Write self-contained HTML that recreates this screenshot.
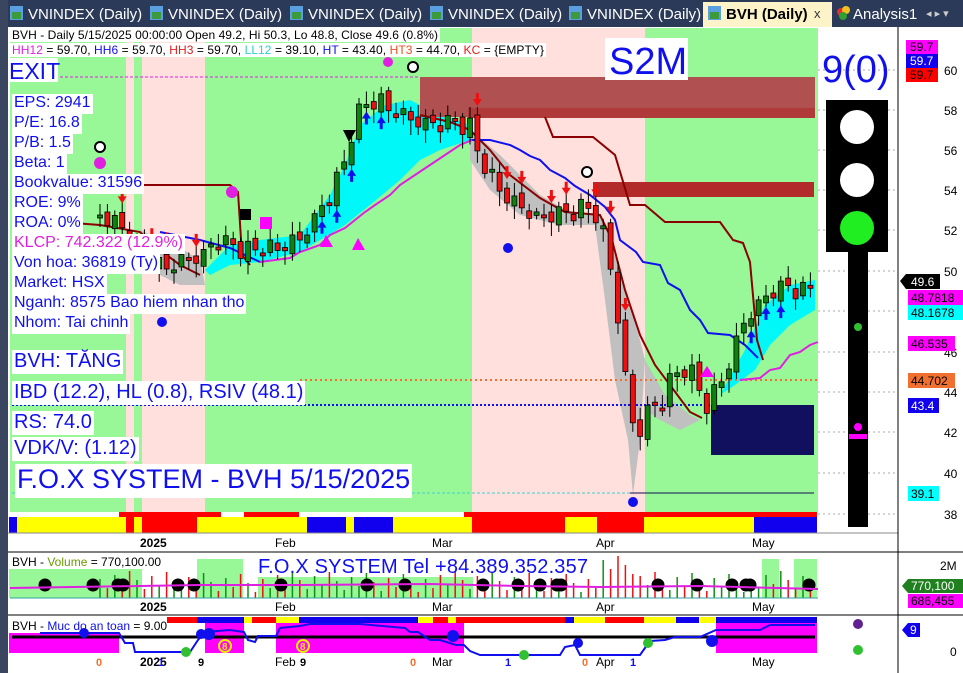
<!DOCTYPE html>
<html><head><meta charset="utf-8"><style>
body{margin:0;width:963px;height:673px;overflow:hidden;background:#fff;font-family:"Liberation Sans","Noto Sans CJK SC",sans-serif;position:relative}
.l{position:absolute;background:#fff;color:#1010ee;white-space:nowrap;line-height:1;padding:1px 2px 1px 2px}
.s15{font-size:16px;height:18px}
.s19{font-size:20px;height:22px}
</style></head><body>
<svg id="s" width="963" height="673" xmlns="http://www.w3.org/2000/svg" style="position:absolute;left:0;top:0;font-family:'Liberation Sans',sans-serif">
<rect x="0" y="0" width="963" height="673" fill="#fff"/>
<rect x="0" y="0" width="963" height="27" fill="#2b3a58"/>
<rect x="0" y="0" width="8" height="673" fill="#3a4560"/>
<g font-size="15" fill="#fff">
<rect x="10" y="6" width="13" height="14" fill="#5aa0e0"/><rect x="12" y="12" width="9" height="7" fill="#3c9a3c"/><text x="28" y="19">VNINDEX (Daily)</text>
<rect x="150" y="6" width="13" height="14" fill="#5aa0e0"/><rect x="152" y="12" width="9" height="7" fill="#3c9a3c"/><text x="168" y="19">VNINDEX (Daily)</text>
<rect x="290" y="6" width="13" height="14" fill="#5aa0e0"/><rect x="292" y="12" width="9" height="7" fill="#3c9a3c"/><text x="308" y="19">VNINDEX (Daily)</text>
<rect x="430" y="6" width="13" height="14" fill="#5aa0e0"/><rect x="432" y="12" width="9" height="7" fill="#3c9a3c"/><text x="448" y="19">VNINDEX (Daily)</text>
<rect x="569" y="6" width="13" height="14" fill="#5aa0e0"/><rect x="571" y="12" width="9" height="7" fill="#3c9a3c"/><text x="587" y="19">VNINDEX (Daily)</text>
</g>
<rect x="703" y="2" width="129" height="25" fill="#fcf3c8"/>
<rect x="708" y="6" width="13" height="14" fill="#5aa0e0"/><rect x="710" y="12" width="9" height="7" fill="#3c9a3c"/>
<text x="726" y="19" font-size="15" font-weight="bold" fill="#000">BVH (Daily)</text>
<text x="814" y="18" font-size="13" fill="#333">x</text>
<circle cx="841" cy="12" r="4" fill="#e03030"/><circle cx="846" cy="10" r="4" fill="#f0c020"/><circle cx="843" cy="16" r="4" fill="#30a030"/>
<text x="853" y="19" font-size="15" fill="#fff">Analysis1</text>
<text x="926" y="17" font-size="11" fill="#ccc">◂ ▸ ▾</text>

<rect x="8" y="27" width="955" height="646" fill="#fff"/>
<rect x="10" y="28" width="116" height="484" fill="#98f898"/>
<rect x="126" y="28" width="8" height="484" fill="#ffe0dc"/>
<rect x="134" y="28" width="8" height="484" fill="#98f898"/>
<rect x="142" y="28" width="63" height="484" fill="#ffe0dc"/>
<rect x="205" y="28" width="267" height="484" fill="#98f898"/>
<rect x="472" y="28" width="173" height="484" fill="#ffe0dc"/>
<rect x="645" y="28" width="173" height="484" fill="#98f898"/>
<g stroke="#aaa" stroke-dasharray="2,3" stroke-width="1">
<line x1="818" y1="70" x2="898" y2="70"/><line x1="818" y1="110" x2="898" y2="110"/><line x1="818" y1="150" x2="898" y2="150"/><line x1="818" y1="190" x2="898" y2="190"/><line x1="818" y1="230" x2="898" y2="230"/><line x1="818" y1="271" x2="898" y2="271"/><line x1="818" y1="311" x2="898" y2="311"/><line x1="818" y1="352" x2="898" y2="352"/><line x1="818" y1="392" x2="898" y2="392"/><line x1="818" y1="432" x2="898" y2="432"/><line x1="818" y1="473" x2="898" y2="473"/><line x1="818" y1="514" x2="898" y2="514"/>
</g>
<polygon points="205,270 230,245 260,240 300,235 315,215 330,195 345,165 360,125 385,105 410,100 430,110 470,125 470,140 440,150 420,160 400,180 370,205 345,225 320,240 300,252 260,262 230,265 210,275" fill="#00f8f8"/>
<polygon points="720,395 745,350 765,305 790,285 815,280 815,310 790,325 770,345 755,370 735,385" fill="#00f8f8"/>
<polygon points="140,230 180,248 200,260 205,285 180,285 150,270" fill="#c0c0c0"/>
<polygon points="470,130 500,155 540,195 575,215 600,215 610,240 625,290 640,340 645,360 640,440 633,495 628,440 615,380 605,300 595,225 560,225 520,215 490,190 470,160" fill="#c0c0c0"/>
<polygon points="645,360 665,395 690,415 700,420 680,430 660,420 645,410" fill="#c0c0c0"/>
<rect x="420" y="77" width="395" height="40" fill="#b05050"/>
<rect x="468" y="108" width="347" height="10" fill="#b03a3a"/>
<rect x="593" y="182" width="221" height="15" fill="#b22a2a"/>
<rect x="711" y="405" width="103" height="50" fill="#10105e"/>
<line x1="30" y1="77" x2="420" y2="77" stroke="#e020e0" stroke-dasharray="3,2"/>
<line x1="300" y1="380" x2="818" y2="380" stroke="#f07030" stroke-width="2" stroke-dasharray="2,3"/>
<line x1="12" y1="405" x2="711" y2="405" stroke="#1010ee" stroke-width="2" stroke-dasharray="2,2"/>
<line x1="12" y1="493" x2="630" y2="493" stroke="#40d0d0" stroke-dasharray="3,2"/>
<line x1="630" y1="493" x2="814" y2="493" stroke="#101050"/>
<polyline points="130,185 230,185 238,192 242,255 250,265" fill="none" stroke="#8b0000" stroke-width="2"/>
<circle cx="232" cy="192" r="6" fill="#e020e0"/>
<polyline points="60,222 100,225 140,232 160,250 180,265 200,275" fill="none" stroke="#8b0000" stroke-width="2"/>
<polyline points="545,117 553,137 593,137 615,155 630,205 645,205 665,222 720,222 733,240 743,243 750,262 757,340 763,360" fill="none" stroke="#8b0000" stroke-width="2"/>
<polyline points="420,115 450,122 470,130 490,150 510,175 540,198 565,212 600,215 612,240 625,290 640,335 655,365 670,385 690,412 702,418" fill="none" stroke="#8b0000" stroke-width="2"/>
<polyline points="470,140 490,140 510,145 520,150 530,156 540,160 550,170 565,178 575,186 590,195 605,207 615,220 620,240 636,252 643,262 660,265 668,283 680,290 690,310 700,320 708,333 730,335 745,345 758,358" fill="none" stroke="#1010ee" stroke-width="2"/>
<polyline points="160,232 200,240 230,248 260,262" fill="none" stroke="#1010ee" stroke-width="2"/>
<polyline points="260,262 290,258 300,252 320,245 330,235 345,228 355,220 365,212 375,205 390,195 400,185 415,175 430,165 445,155 460,145 472,140" fill="none" stroke="#e020e0" stroke-width="2"/>
<polyline points="740,380 760,378 770,370 780,368 790,355 800,352 810,345 818,342" fill="none" stroke="#e020e0" stroke-width="2"/>
<g id="candles"></g>
<g id="marks"></g>
<!-- markers -->
<g>
<circle cx="100" cy="163" r="6" fill="#e020e0"/><circle cx="388" cy="62" r="5" fill="#e020e0"/>
<circle cx="100" cy="147" r="5" fill="#fff" stroke="#000" stroke-width="2"/>
<circle cx="413" cy="67" r="5" fill="#fff" stroke="#000" stroke-width="2"/>
<circle cx="587" cy="172" r="5" fill="#fff" stroke="#000" stroke-width="2"/>
<circle cx="162" cy="322" r="5" fill="#1010ee"/><circle cx="508" cy="248" r="5" fill="#1010ee"/><circle cx="633" cy="502" r="5" fill="#1010ee"/>
<rect x="240" y="209" width="11" height="11" fill="#000"/><rect x="260" y="217" width="12" height="12" fill="#f0f"/>
<polygon points="343,130 356,130 349,142" fill="#000"/>
<polygon points="320,247 333,247 326,235" fill="#f0f"/><polygon points="352,250 365,250 358,238" fill="#f0f"/>
<polygon points="700,377 714,377 707,366" fill="#f0f"/>
</g>
<g>
<rect x="119" y="512" width="102" height="5" fill="#f00"/><rect x="244" y="512" width="55" height="5" fill="#f00"/><rect x="464" y="512" width="353" height="5" fill="#f00"/>
<rect x="9" y="517" width="8" height="16" fill="#10e"/><rect x="17" y="517" width="109" height="16" fill="#ff0"/><rect x="126" y="517" width="8" height="16" fill="#f00"/><rect x="134" y="517" width="8" height="16" fill="#ff0"/><rect x="142" y="517" width="55" height="16" fill="#f00"/><rect x="197" y="517" width="110" height="16" fill="#ff0"/><rect x="307" y="517" width="39" height="16" fill="#10e"/><rect x="346" y="517" width="8" height="16" fill="#ff0"/><rect x="354" y="517" width="39" height="16" fill="#10e"/><rect x="393" y="517" width="79" height="16" fill="#ff0"/><rect x="472" y="517" width="93" height="16" fill="#f00"/><rect x="565" y="517" width="32" height="16" fill="#ff0"/><rect x="597" y="517" width="47" height="16" fill="#f00"/><rect x="644" y="517" width="110" height="16" fill="#ff0"/><rect x="754" y="517" width="63" height="16" fill="#10e"/>
</g>
<g font-size="12" fill="#000">
<line x1="8" y1="533" x2="898" y2="533" stroke="#888"/>
<text x="140" y="547" font-weight="bold">2025</text><text x="275" y="547">Feb</text><text x="432" y="547">Mar</text><text x="596" y="547">Apr</text><text x="752" y="547">May</text>
<line x1="8" y1="552" x2="963" y2="552" stroke="#000"/>
<text x="140" y="611" font-weight="bold">2025</text><text x="275" y="611">Feb</text><text x="432" y="611">Mar</text><text x="596" y="611">Apr</text><text x="752" y="611">May</text>
<line x1="8" y1="615" x2="963" y2="615" stroke="#000"/>
<text x="140" y="666" font-weight="bold">2025</text><text x="275" y="666">Feb</text><text x="432" y="666">Mar</text><text x="596" y="666">Apr</text><text x="752" y="666">May</text>
</g>
<rect x="9" y="569" width="133" height="29" fill="#98f898"/>
<rect x="197" y="559" width="46" height="39" fill="#98f898"/><rect x="258" y="577" width="215" height="21" fill="#98f898"/>
<rect x="762" y="559" width="17" height="39" fill="#98f898"/><rect x="794" y="559" width="23" height="39" fill="#98f898"/>
<g id="vol"></g>
<polyline points="10,588 140,586 200,585 300,585 430,584 520,586 600,587 700,586 818,589" fill="none" stroke="#e020e0" stroke-width="2"/>
<text x="12" y="566" font-size="12">BVH - <tspan fill="#6a9a00">Volume</tspan> = 770,100.00</text>
<text x="258" y="573" font-size="20" fill="#1010ee" textLength="330">F.O.X SYSTEM Tel +84.389.352.357</text>
<g>
<rect x="167" y="617" width="30" height="6" fill="#f00"/><rect x="197" y="617" width="47" height="6" fill="#10e"/><rect x="244" y="617" width="8" height="6" fill="#ff0"/><rect x="252" y="617" width="24" height="6" fill="#f00"/><rect x="276" y="617" width="23" height="6" fill="#ff0"/><rect x="299" y="617" width="119" height="6" fill="#10e"/><rect x="418" y="617" width="15" height="6" fill="#ff0"/><rect x="433" y="617" width="15" height="6" fill="#f00"/><rect x="448" y="617" width="8" height="6" fill="#ff0"/><rect x="456" y="617" width="109" height="6" fill="#f00"/><rect x="565" y="617" width="9" height="6" fill="#10e"/><rect x="574" y="617" width="31" height="6" fill="#ff0"/><rect x="605" y="617" width="39" height="6" fill="#f00"/><rect x="644" y="617" width="32" height="6" fill="#ff0"/><rect x="676" y="617" width="23" height="6" fill="#10e"/><rect x="699" y="617" width="17" height="6" fill="#ff0"/><rect x="716" y="617" width="101" height="6" fill="#10e"/>
<rect x="9" y="633" width="110" height="20" fill="#f0f"/><rect x="205" y="623" width="39" height="30" fill="#f0f"/><rect x="276" y="623" width="188" height="30" fill="#f0f"/><rect x="716" y="623" width="101" height="30" fill="#f0f"/>
<line x1="12" y1="637" x2="815" y2="637" stroke="#000" stroke-width="3"/>
<polyline points="40,633 119,633 125,643 133,643 135,652 190,652 198,640 205,632 230,630 244,632 248,640 255,642 258,636 276,636 280,628 300,626 310,624 360,624 405,628 410,632 418,632 430,640 440,640 456,645 464,645 470,651 480,655 560,655 565,647 575,645 580,655 640,655 650,641 665,640 675,637 700,637 716,630 760,630 770,625 815,625" fill="none" stroke="#1010ee" stroke-width="2"/>
<g fill="#1010ee"><circle cx="84" cy="633" r="5"/><circle cx="209" cy="634" r="6"/><circle cx="453" cy="636" r="6"/><circle cx="578" cy="643" r="5"/><circle cx="712" cy="641" r="6"/></g>
<g fill="#30c030"><circle cx="186" cy="652" r="5"/><circle cx="524" cy="655" r="5"/><circle cx="648" cy="643" r="5"/></g>
<circle cx="201" cy="634" r="5" fill="#1010ee"/>
<text x="12" y="630" font-size="12">BVH - <tspan fill="#1010ee">Muc do an toan</tspan> = 9.00</text>
<circle cx="225" cy="646" r="6" fill="none" stroke="#ee0" stroke-width="2"/><circle cx="303" cy="646" r="6" fill="none" stroke="#ee0" stroke-width="2"/>
<g font-size="10" font-weight="bold"><text x="222" y="650" fill="#ee0">8</text><text x="300" y="650" fill="#ee0">8</text></g>
<g font-size="11" font-weight="bold"><text x="96" y="666" fill="#f07030">0</text><text x="410" y="666" fill="#f07030">0</text><text x="582" y="666" fill="#f07030">0</text><text x="158" y="666" fill="#1010ee">1</text><text x="505" y="666" fill="#1010ee">1</text><text x="630" y="666" fill="#1010ee">1</text><text x="198" y="666">9</text><text x="300" y="666">9</text></g>
<circle cx="858" cy="624" r="5" fill="#602090"/><circle cx="858" cy="650" r="5" fill="#30c030"/>
</g>
<line x1="898" y1="27" x2="898" y2="673" stroke="#000"/>
<g font-size="12" fill="#000">
<text x="944" y="75">60</text><text x="944" y="115">58</text><text x="944" y="155">56</text><text x="944" y="195">54</text><text x="944" y="235">52</text><text x="944" y="276">50</text><text x="944" y="357">46</text><text x="944" y="397">44</text><text x="944" y="437">42</text><text x="944" y="478">40</text><text x="944" y="519">38</text>
<text x="940" y="570">2M</text><text x="950" y="656">0</text>
</g>
<g font-size="12">
<rect x="906" y="40" width="32" height="14" fill="#f0f"/><text x="910" y="51">59.7</text>
<rect x="906" y="54" width="32" height="14" fill="#10e"/><text x="910" y="65" fill="#fff">59.7</text>
<rect x="906" y="68" width="32" height="14" fill="#f00"/><text x="910" y="79">59.7</text>
<polygon points="900,281 906,274 940,274 940,289 906,289" fill="#000"/><text x="911" y="286" fill="#fff">49.6</text>
<rect x="908" y="290" width="55" height="15" fill="#f0f"/><text x="911" y="302">48.7818</text>
<rect x="908" y="305" width="55" height="15" fill="#0ff"/><text x="911" y="317">48.1678</text>
<rect x="908" y="336" width="47" height="15" fill="#f0f"/><text x="911" y="348">46.535</text>
<rect x="908" y="373" width="47" height="15" fill="#f07030"/><text x="911" y="385">44.702</text>
<rect x="908" y="398" width="31" height="15" fill="#10e"/><text x="911" y="410" fill="#fff">43.4</text>
<rect x="908" y="486" width="31" height="15" fill="#0ff"/><text x="911" y="498">39.1</text>
<polygon points="902,586 908,579 963,579 963,593 908,593" fill="#208020"/><text x="911" y="590" fill="#fff">770,100</text>
<rect x="908" y="594" width="55" height="14" fill="#f0f"/><text x="911" y="605">686,455</text>
<polygon points="902,630 908,623 920,623 920,637 908,637" fill="#10e"/><text x="910" y="634" fill="#fff">9</text>
</g>
<text x="822" y="82" font-size="38" fill="#1010ee">9(0)</text>
<rect x="826" y="100" width="62" height="152" fill="#000"/>
<circle cx="857" cy="127" r="17" fill="#fff"/><circle cx="857" cy="180" r="17" fill="#fff"/><circle cx="857" cy="228" r="17" fill="#20ee20"/>
<rect x="848" y="252" width="20" height="275" fill="#000"/>
<circle cx="858" cy="327" r="4" fill="#30c030"/><circle cx="858" cy="427" r="4" fill="#f0f"/><rect x="849" y="434" width="18" height="5" fill="#f0f"/>
<rect x="605" y="38" width="83" height="42" fill="#fff"/>
<text x="609" y="74" font-size="38" fill="#1010ee">S2M</text>
<rect x="10" y="28" width="430" height="14" fill="#fff"/>
<text x="12" y="39" font-size="12" textLength="426">BVH - Daily 5/15/2025 00:00:00 Open 49.2, Hi 50.3, Lo 48.8, Close 49.6 (0.8%)</text>
<rect x="10" y="43" width="536" height="14" fill="#fff"/>
<text x="12" y="54" font-size="12" textLength="532"><tspan fill="#e020e0">HH12</tspan> = 59.70, <tspan fill="#1010ee">HH6</tspan> = 59.70, <tspan fill="#e02020">HH3</tspan> = 59.70, <tspan fill="#30d0d0">LL12</tspan> = 39.10, <tspan fill="#1010ee">HT</tspan>  = 43.40, <tspan fill="#f05020">HT3</tspan>  = 44.70, <tspan fill="#e02020">KC</tspan> = {EMPTY}</text>
<rect x="8" y="58" width="50" height="24" fill="#fff"/>
<text x="9" y="79" font-size="23" fill="#1010ee">EXIT</text>
</svg>
<div class="l s15" style="left:12px;top:94px">EPS: 2941</div>
<div class="l s15" style="left:12px;top:114px">P/E: 16.8</div>
<div class="l s15" style="left:12px;top:134px">P/B: 1.5</div>
<div class="l s15" style="left:12px;top:154px">Beta: 1</div>
<div class="l s15" style="left:12px;top:174px">Bookvalue: 31596</div>
<div class="l s15" style="left:12px;top:194px">ROE: 9%</div>
<div class="l s15" style="left:12px;top:214px">ROA: 0%</div>
<div class="l s15" style="left:12px;top:234px;color:#e020e0">KLCP: 742.322 (12.9%)</div>
<div class="l s15" style="left:12px;top:254px">Von hoa: 36819 (Ty)</div>
<div class="l s15" style="left:12px;top:274px">Market: HSX</div>
<div class="l s15" style="left:12px;top:294px">Nganh: 8575 Bao hiem nhan tho</div>
<div class="l s15" style="left:12px;top:314px">Nhom: Tai chinh</div>
<div class="l s19" style="left:12px;top:350px">BVH: TĂNG</div>
<div class="l s19" style="left:12px;top:381px">IBD (12.2), HL (0.8), RSIV (48.1)</div>
<div class="l s19" style="left:12px;top:411px">RS: 74.0</div>
<div class="l s19" style="left:12px;top:437px">VDK/V:  (1.12)</div>
<div class="l" style="left:15px;top:464px;font-size:27px;height:31px;padding-top:2px">F.O.X SYSTEM - BVH 5/15/2025</div>
<script>
(function(){
var NS="http://www.w3.org/2000/svg";
function el(p,t,a){var e=document.createElementNS(NS,t);for(var k in a)e.setAttribute(k,a[k]);p.appendChild(e);return e;}
var K=[[100,215],[120,225],[140,250],[160,265],[180,262],[200,255],[215,240],[235,245],[255,250],[280,245],[300,240],[315,215],[330,195],[345,160],[355,115],[365,105],[380,100],[395,110],[410,120],[425,120],[440,125],[455,120],[470,125],[480,160],[495,180],[510,200],[525,210],[540,215],[555,215],[570,210],[585,205],[600,220],[610,260],[620,330],[630,420],[640,430],[650,400],[660,410],[670,380],[685,365],[695,375],[705,410],[720,380],[730,360],[745,320],[760,300],[775,290],[790,285],[805,290],[815,285]];
function iy(x){for(var i=1;i<K.length;i++){if(x<=K[i][0]){var a=K[i-1],b=K[i];return a[1]+(b[1]-a[1])*(x-a[0])/(b[0]-a[0]);}}return K[K.length-1][1];}
var g=document.getElementById("candles"),v=document.getElementById("vol"),m=document.getElementById("marks");
var prev=iy(100),i=0;
for(var x=100;x<=814;x+=7.4){i++;
 var c=iy(x)+((i%3)-1)*7+((i%5)==0?5:0);var o=prev+((i%2)?3:-3);
 var up=c<o;var top=Math.min(o,c),bot=Math.max(o,c);if(bot-top<3)bot=top+3;
 var hi=top-4-(i*7%10),lo=bot+4+(i*5%12);
 el(g,"line",{x1:x,y1:hi,x2:x,y2:lo,stroke:"#000","stroke-width":1});
 el(g,"rect",{x:x-2.5,y:top,width:5,height:bot-top,fill:up?"#108010":"#ee1010",stroke:"#000","stroke-width":0.8});
 var h=6+(i*13%22);if(x>600&&x<640)h+=15;
 el(v,"line",{x1:x,y1:598-h,x2:x,y2:598,stroke:up?"#109010":"#ee1010","stroke-width":1.5});
 if(!up && i%2==0 && ((x>120&&x<200)||(x>470&&x<640))){var ay=top-22;el(m,"path",{d:"M"+(x-1.5)+" "+ay+"h3v6h3l-4.5,7l-4.5,-7h3z",fill:"#ee1010"});}
 if(up && i%2==1 && ((x>320&&x<420)||(x>740&&x<815))){var by=bot+4;el(m,"path",{d:"M"+(x-1.5)+" "+(by+13)+"h3v-6h3l-4.5,-7l-4.5,7h3z",fill:"#1010ee"});}
 prev=c;}
var dots=[45,93,118,123,178,194,281,367,405,483,518,540,557,561,658,697,732,746,750,809];
dots.forEach(function(d){el(v,"circle",{cx:d,cy:585,r:6.5,fill:"#000"});});
el(v,"line",{x1:10,y1:598,x2:818,y2:598,stroke:"#30a0a0"});
})();
</script>
</body></html>
